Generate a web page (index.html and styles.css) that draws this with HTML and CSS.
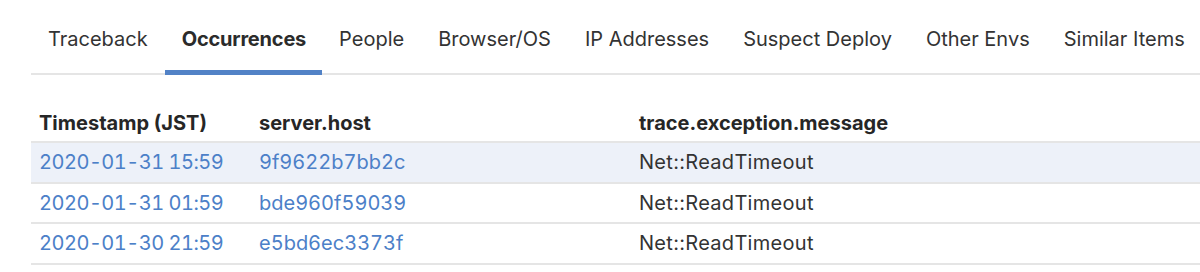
FILE: index.html
```html
<!DOCTYPE html>
<html lang="en">
<head>
<meta charset="UTF-8">
<title>Occurrences</title>
<link rel="stylesheet" href="styles.css">
</head>
<body>
<div class="container">
  <ul class="tabs">
    <li class="tab">Traceback</li>
    <li class="tab active">Occurrences</li>
    <li class="tab">People</li>
    <li class="tab">Browser/OS</li>
    <li class="tab">IP Addresses</li>
    <li class="tab">Suspect Deploy</li>
    <li class="tab">Other Envs</li>
    <li class="tab">Similar Items</li>
  </ul>

  <table class="occurrences">
    <thead>
      <tr>
        <th class="col-time">Timestamp (JST)</th>
        <th class="col-host">server.host</th>
        <th>trace.exception.message</th>
      </tr>
    </thead>
    <tbody>
      <tr class="selected">
        <td><a class="date" href="#">2020-01-31 15:59</a></td>
        <td><a href="#">9f9622b7bb2c</a></td>
        <td class="message">Net::ReadTimeout</td>
      </tr>
      <tr>
        <td><a class="date" href="#">2020-01-31 01:59</a></td>
        <td><a href="#">bde960f59039</a></td>
        <td class="message">Net::ReadTimeout</td>
      </tr>
      <tr>
        <td><a class="date" href="#">2020-01-30 21:59</a></td>
        <td><a href="#">e5bd6ec3373f</a></td>
        <td class="message">Net::ReadTimeout</td>
      </tr>
    </tbody>
  </table>
</div>
</body>
</html>
```

FILE: styles.css
```css
body {
  font-family: Inter, "Noto Sans", Arial, sans-serif;
  margin: 0;
  padding: 0;
  background-color: #fff;
  color: #333;
}

.container {
  padding: 21px 0 0 31px;
}

.tabs {
  display: flex;
  list-style: none;
  margin: 0;
  padding: 0;
  border-bottom: 2px solid #e5e5e5;
}

.tab {
  padding: 6px 17px 0;
  height: 52px;
  box-sizing: border-box;
  font-size: 20px;
  color: #333;
  white-space: nowrap;
  margin-bottom: -2px;
}

.tab.active {
  padding: 6px 16px 0 17px;
  font-weight: 700;
  letter-spacing: -0.2px;
  color: #2b2b2b;
  border-bottom: 5px solid #5282c6;
  height: 54px;
}

.occurrences {
  width: 100%;
  margin-top: 36px;
  border-collapse: collapse;
  font-size: 20px;
}

.occurrences th {
  text-align: left;
  font-weight: 700;
  color: #262626;
  padding: 0 8px 6px;
  border-bottom: 2px solid #e5e5e5;
}

.col-time {
  width: 204px;
}

.col-host {
  width: 364px;
}

.occurrences td {
  height: 38.5px;
  padding: 0 8px;
  border-bottom: 2px solid #e5e5e5;
  color: #333;
}

.occurrences td.message {
  letter-spacing: 0.3px;
}

.occurrences tr.selected td {
  background-color: #edf1f9;
}

.occurrences a {
  color: #4c80c8;
  text-decoration: none;
  font-variant-numeric: tabular-nums;
}

.occurrences a.date {
  letter-spacing: -0.5px;
}
```
